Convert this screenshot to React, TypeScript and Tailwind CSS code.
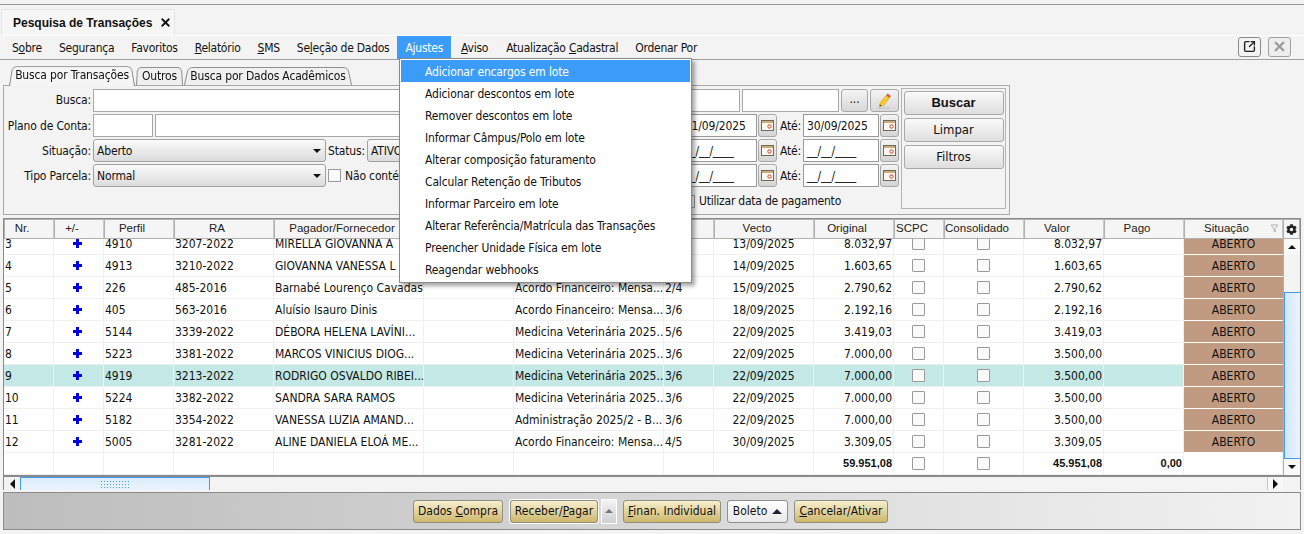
import { SquareArrowOutUpRight, X } from "lucide-react";
import { FaCog } from "react-icons/fa";
import type { ReactNode } from "react";

type Row = {
  nr: string;
  perfil: string;
  ra: string;
  nome: string;
  desc: string;
  parc: string;
  vecto: string;
  original: string;
  valor: string;
  active?: boolean;
};

const rows: Row[] = [
  { nr: "3", perfil: "4910", ra: "3207-2022", nome: "MIRELLA GIOVANNA A", desc: "", parc: "", vecto: "13/09/2025", original: "8.032,97", valor: "8.032,97" },
  { nr: "4", perfil: "4913", ra: "3210-2022", nome: "GIOVANNA VANESSA L", desc: "", parc: "", vecto: "14/09/2025", original: "1.603,65", valor: "1.603,65" },
  { nr: "5", perfil: "226", ra: "485-2016", nome: "Barnabé Lourenço Cavadas", desc: "Acordo Financeiro: Mensa...", parc: "2/4", vecto: "15/09/2025", original: "2.790,62", valor: "2.790,62" },
  { nr: "6", perfil: "405", ra: "563-2016", nome: "Aluísio Isauro Dinis", desc: "Acordo Financeiro: Mensa...", parc: "3/6", vecto: "18/09/2025", original: "2.192,16", valor: "2.192,16" },
  { nr: "7", perfil: "5144", ra: "3339-2022", nome: "DÉBORA HELENA LAVÍNI...", desc: "Medicina Veterinária 2025...", parc: "5/6", vecto: "22/09/2025", original: "3.419,03", valor: "3.419,03" },
  { nr: "8", perfil: "5223", ra: "3381-2022", nome: "MARCOS VINICIUS DIOG...", desc: "Medicina Veterinária 2025...", parc: "3/6", vecto: "22/09/2025", original: "7.000,00", valor: "3.500,00" },
  { nr: "9", perfil: "4919", ra: "3213-2022", nome: "RODRIGO OSVALDO RIBEI...", desc: "Medicina Veterinária 2025...", parc: "3/6", vecto: "22/09/2025", original: "7.000,00", valor: "3.500,00", active: true },
  { nr: "10", perfil: "5224", ra: "3382-2022", nome: "SANDRA SARA RAMOS", desc: "Medicina Veterinária 2025...", parc: "3/6", vecto: "22/09/2025", original: "7.000,00", valor: "3.500,00" },
  { nr: "11", perfil: "5182", ra: "3354-2022", nome: "VANESSA LUZIA AMAND...", desc: "Administração 2025/2 - B...", parc: "3/6", vecto: "22/09/2025", original: "7.000,00", valor: "3.500,00" },
  { nr: "12", perfil: "5005", ra: "3281-2022", nome: "ALINE DANIELA ELOÁ ME...", desc: "Acordo Financeiro: Mensa...", parc: "4/5", vecto: "30/09/2025", original: "3.309,05", valor: "3.309,05" },
];

const menuItems = [
  "Adicionar encargos em lote",
  "Adicionar descontos em lote",
  "Remover descontos em lote",
  "Informar Câmpus/Polo em lote",
  "Alterar composição faturamento",
  "Calcular Retenção de Tributos",
  "Informar Parceiro em lote",
  "Alterar Referência/Matrícula das Transações",
  "Preencher Unidade Física em lote",
  "Reagendar webhooks",
];

const headers = [
  { label: "Nr.", w: "w-[50px]" },
  { label: "+/-", w: "w-[50px]" },
  { label: "Perfil", w: "w-[70px]" },
  { label: "RA", w: "w-[100px]" },
  { label: "Pagador/Fornecedor", w: "w-[150px]" },
  { label: "", w: "w-[90px]" },
  { label: "", w: "w-[150px]" },
  { label: "", w: "w-[50px]" },
  { label: "Vecto", w: "w-[100px]" },
  { label: "Original", w: "w-[80px]" },
  { label: "SCPC", w: "w-[50px]" },
  { label: "Consolidado", w: "w-[80px]" },
  { label: "Valor", w: "w-[80px]" },
  { label: "Pago", w: "w-[80px]" },
  { label: "Situação", w: "w-[99px]" },
];

const Cell = ({ w, className = "", children }: { w: string; className?: string; children?: ReactNode }) => (
  <div className={`${w} shrink-0 h-full border-r border-b border-[#f0f0f0] px-px flex items-center whitespace-nowrap overflow-hidden ${className}`}>
    {children}
  </div>
);

const Check = () => <div className="w-[13px] h-[13px] border border-[#9a9a9a] bg-[#fafafa] rounded-[1px]" />;

const DataRow = ({ r }: { r: Row }) => (
  <div className={`flex h-[22px] shrink-0 text-[#111] ${r.active ? "bg-[#c3e8e5]" : "bg-white"}`}>
    <Cell w="w-[50px]">{r.nr}</Cell>
    <Cell w="w-[50px]" className="justify-center pr-[4px]">
      <span className="relative block w-[9px] h-[9px]">
        <span className="absolute left-0 top-[3px] w-[9px] h-[3px] bg-[#0000e6]" />
        <span className="absolute left-[3px] top-0 w-[3px] h-[9px] bg-[#0000e6]" />
      </span>
    </Cell>
    <Cell w="w-[70px]">{r.perfil}</Cell>
    <Cell w="w-[100px]">{r.ra}</Cell>
    <Cell w="w-[150px]">{r.nome}</Cell>
    <Cell w="w-[90px]" />
    <Cell w="w-[150px]">{r.desc}</Cell>
    <Cell w="w-[50px]">{r.parc}</Cell>
    <Cell w="w-[100px]" className="justify-center">{r.vecto}</Cell>
    <Cell w="w-[80px]" className="justify-end">{r.original}</Cell>
    <Cell w="w-[50px]" className="justify-center"><Check /></Cell>
    <Cell w="w-[80px]" className="justify-center"><Check /></Cell>
    <Cell w="w-[80px]" className="justify-end">{r.valor}</Cell>
    <Cell w="w-[80px]" />
    <div className="w-[99px] shrink-0 h-full bg-[#c19a82] border-b border-white flex items-center justify-center">ABERTO</div>
  </div>
);

const CalBtn = () => (
  <button className="w-[19px] h-[23px] ml-px flex items-center justify-center rounded-[3px] border border-[#a8a8a8] bg-gradient-to-b from-[#f4f4f4] to-[#d4d4d4]">
    <svg width="13" height="11" viewBox="0 0 13 11">
      <rect x="0.5" y="0.5" width="12" height="10" fill="#fbf8f0" stroke="#6f6a5c" />
      <rect x="1" y="1" width="11" height="2" fill="#c9ae7c" />
      <circle cx="8.5" cy="6.5" r="1.7" fill="none" stroke="#d8402e" />
    </svg>
  </button>
);

const DateInput = ({ value }: { value: string }) => (
  <div className="w-[76px] h-[23px] border border-[#9a9a9a] bg-white flex items-center px-[3px] shrink-0">{value}</div>
);

const Select = ({ value, w }: { value: string; w: string }) => (
  <div className={`${w} h-[23px] shrink-0 border border-[#a0a0a0] rounded-[3px] bg-gradient-to-b from-[#fafafa] to-[#dcdcdc] flex items-center justify-between pl-[3px] pr-[4px]`}>
    <span>{value}</span>
    <span className="w-0 h-0 border-x-[4px] border-x-transparent border-t-[4px] border-t-[#111]" />
  </div>
);

const SideBtn = ({ children, className = "" }: { children: ReactNode; className?: string }) => (
  <button className={`w-[100px] h-[24px] rounded-[3px] border border-[#a8a8a8] bg-gradient-to-b from-[#fafafa] to-[#dedede] text-[13px] tracking-normal ${className}`}>{children}</button>
);

const GoldBtn = ({ children, w }: { children: ReactNode; w: string }) => (
  <button className={`${w} h-[23px] rounded-[3px] border border-[#8f8f80] bg-gradient-to-b from-[#f7f0cf] to-[#cdb76c] text-[#111] whitespace-nowrap`}>{children}</button>
);

const Tab = ({ children, active, className = "" }: { children: ReactNode; active?: boolean; className?: string }) => (
  <div
    className={`relative isolate flex items-center justify-center whitespace-nowrap tracking-[-0.16px] before:absolute before:inset-0 before:-z-10 before:origin-bottom before:rounded-t-[5px] before:border before:border-b-0 before:border-[#8a8a8a] before:[transform:perspective(40px)_rotateX(6deg)] ${
      active ? "h-[21px] -mb-px z-10 pb-[2px] before:bg-[#f5f5f5]" : "h-[19px] before:bg-[#f0f0f0]"
    } ${className}`}
  >
    {children}
  </div>
);

const MenuBar = () => (
  <div className="h-[24px] flex items-center border-b border-[#a0a0a0] pl-[4px] pr-[13px] tracking-[-0.25px]">
    <span className="px-[8px] mr-px"><span>S<u>o</u>bre</span></span>
    <span className="px-[8px] mr-px">Segurança</span>
    <span className="px-[8px] mr-px">Favoritos</span>
    <span className="px-[8px] mr-px"><u>R</u>elatório</span>
    <span className="px-[8px] mr-px"><u>S</u>MS</span>
    <span className="px-[8px]">Se<u>l</u>eção de Dados</span>
    <span className="px-[8px] mr-[2px] h-[23px] flex items-center bg-[#3c9cfa] text-white">Ajustes</span>
    <span className="px-[8px] mr-[2px]"><u>A</u>viso</span>
    <span className="px-[8px] mr-px">Atualização <u>C</u>adastral</span>
    <span className="px-[8px] mr-px">Ordenar Por</span>
    <div className="ml-auto flex gap-[7px] -mt-[2px]">
      <button className="w-[23px] h-[20px] flex items-center justify-center rounded-[3px] border border-[#8a8a8a] bg-[#f4f4f4]">
        <SquareArrowOutUpRight size={13} strokeWidth={2.6} className="text-[#222]" />
      </button>
      <button className="w-[23px] h-[20px] flex items-center justify-center rounded-[3px] border border-[#a0a0a0] bg-[#eeeeee]">
        <X size={15} strokeWidth={3.8} className="text-[#9a9a9a]" />
      </button>
    </div>
  </div>
);

const FilterPanel = () => (
  <div className="w-[1007px] h-[130px] border border-[#a8a8a8] bg-[#f3f3f3] ml-[3px] flex pl-[2px] pr-[3px] pt-[2px] gap-[2px] tracking-[-0.15px]">
    <div className="w-[893px] shrink-0 flex flex-col">
      <div className="flex items-center h-[24px] gap-[2px] shrink-0">
        <span className="w-[85px] text-right shrink-0">Busca:</span>
        <div className="w-[647px] h-[23px] bg-white border border-[#a8a8a8]" />
        <div className="w-[97px] h-[23px] bg-white border border-[#a8a8a8]" />
        <button className="w-[27px] h-[23px] rounded-[3px] border border-[#a8a8a8] bg-gradient-to-b from-[#f4f4f4] to-[#d8d8d8] leading-none pb-[2px]">...</button>
        <button className="w-[29px] h-[23px] flex items-center justify-center rounded-[3px] border border-[#a8a8a8] bg-gradient-to-b from-[#f4f4f4] to-[#d8d8d8]">
          <svg width="17" height="17" viewBox="0 0 17 17">
            <path d="M2 16 H14" stroke="#c0c0c0" />
            <path d="M4 11 L10 3.5 L13.5 6 L7.5 13.5 L3.5 14.5 Z" fill="#f6c92e" stroke="#dba51e" strokeWidth="0.6" />
            <path d="M10 3.5 L11.5 1.5 L15 4 L13.5 6 Z" fill="#d9603c" />
            <path d="M3.5 14.5 L4 12.5 L5.5 13.8 Z" fill="#333" />
          </svg>
        </button>
      </div>
      <div className="flex items-center h-[25px] gap-[2px] mt-[1px] shrink-0">
        <span className="w-[85px] text-right shrink-0 whitespace-nowrap">Plano de Conta:</span>
        <div className="w-[60px] h-[23px] bg-white border border-[#a8a8a8] shrink-0" />
        <div className="w-[500px] h-[23px] bg-white border border-[#a8a8a8] shrink-0" />
        <div className="ml-auto flex items-center">
          <DateInput value="01/09/2025" />
          <CalBtn />
          <span className="ml-[3px] mr-[2px]">Até:</span>
          <DateInput value="30/09/2025" />
          <CalBtn />
        </div>
      </div>
      <div className="flex items-center h-[25px] gap-[2px] shrink-0">
        <span className="w-[85px] text-right shrink-0">Situação:</span>
        <Select value="Aberto" w="w-[233px]" />
        <span>Status:</span>
        <Select value="ATIVO" w="w-[120px]" />
        <div className="ml-auto flex items-center">
          <DateInput value="__/__/____" />
          <CalBtn />
          <span className="ml-[3px] mr-[2px]">Até:</span>
          <DateInput value="__/__/____" />
          <CalBtn />
        </div>
      </div>
      <div className="flex items-center h-[25px] gap-[2px] shrink-0">
        <span className="w-[85px] text-right shrink-0">Tipo Parcela:</span>
        <Select value="Normal" w="w-[233px]" />
        <div className="w-[13px] h-[13px] border border-[#9a9a9a] bg-[#fafafa] mr-[2px]" />
        <span>Não contém</span>
        <div className="ml-auto flex items-center">
          <DateInput value="__/__/____" />
          <CalBtn />
          <span className="ml-[3px] mr-[2px]">Até:</span>
          <DateInput value="__/__/____" />
          <CalBtn />
        </div>
      </div>
      <div className="flex items-center h-[24px] pl-[676px] gap-[4px] mt-[1px]">
        <div className="w-[13px] h-[13px] border border-[#9a9a9a] bg-[#fafafa]" />
        <span className="tracking-[-0.22px]">Utilizar data de pagamento</span>
      </div>
    </div>
    <div className="w-[105px] h-[121px] border border-[#b4b4b4] flex flex-col items-center pt-[2px] gap-[3px] shrink-0">
      <SideBtn className="font-bold font-['Liberation_Sans']">Buscar</SideBtn>
      <SideBtn>Limpar</SideBtn>
      <SideBtn>Filtros</SideBtn>
    </div>
  </div>
);

const Table = () => (
  <div className="mx-[3px] mt-[3px] w-[1298px] border border-[#8a8a8a] border-b-0 flex flex-col bg-white">
    <div className="flex h-[20px] bg-[#f3f3f3]">
      {headers.map((h, i) => (
        <div
          key={i}
          className={`${h.w} shrink-0 relative border border-[#b0b0b0] border-r-[#c8c8c8] bg-[#f5f5f5] flex items-center justify-center pr-[14px] whitespace-nowrap text-[11.5px] text-[#222] font-['Liberation_Sans']`}
        >
          {h.label}
          {h.label === "Situação" && (
            <svg width="9" height="9" viewBox="0 0 9 9" className="absolute right-[3px] top-[4px]">
              <path d="M1 1 H8 L5.2 4.5 V8 L3.8 7 V4.5 Z" fill="none" stroke="#b0b0b0" />
            </svg>
          )}
        </div>
      ))}
      <div className="w-[17px] shrink-0 border border-[#b0b0b0] flex items-center justify-center bg-[#f5f5f5]">
        <FaCog size={11} className="text-[#222]" />
      </div>
    </div>
    <div className="flex h-[236px]">
      <div className="w-[1279px] shrink-0 overflow-hidden flex flex-col">
        <div className="-mt-[6px] flex flex-col">
          {rows.map((r) => (
            <DataRow key={r.nr} r={r} />
          ))}
          <div className="flex h-[22px] shrink-0 bg-white font-bold text-[11px] text-[#111] font-['Liberation_Sans']">
            <Cell w="w-[50px]" />
            <Cell w="w-[50px]" />
            <Cell w="w-[70px]" />
            <Cell w="w-[100px]" />
            <Cell w="w-[150px]" />
            <Cell w="w-[90px]" />
            <Cell w="w-[150px]" />
            <Cell w="w-[50px]" />
            <Cell w="w-[100px]" />
            <Cell w="w-[80px]" className="justify-end">59.951,08</Cell>
            <Cell w="w-[50px]" className="justify-center"><Check /></Cell>
            <Cell w="w-[80px]" className="justify-center"><Check /></Cell>
            <Cell w="w-[80px]" className="justify-end">45.951,08</Cell>
            <Cell w="w-[80px]" className="justify-end">0,00</Cell>
            <Cell w="w-[99px]" />
          </div>
        </div>
      </div>
      <div className="w-[17px] shrink-0 bg-[#f3f3f3] border-l border-[#b0b0b0] flex flex-col">
        <div className="h-[16px] flex items-center justify-center bg-[#f8f8f8]">
          <span className="w-0 h-0 border-x-[4px] border-x-transparent border-b-[4px] border-b-[#111]" />
        </div>
        <div className="mt-auto h-[167px] border-t border-b border-l border-[#3d9bf0] bg-gradient-to-r from-[#d4e7fb] to-[#eaf4fe]" />
        <div className="h-[16px] shrink-0 flex items-center justify-center bg-[#f8f8f8]">
          <span className="w-0 h-0 border-x-[4px] border-x-transparent border-t-[4px] border-t-[#111]" />
        </div>
      </div>
    </div>
    <div className="flex h-[15px] border-t-2 border-[#8a8a8a] bg-[#f3f3f3]">
      <div className="w-[16px] shrink-0 flex items-center justify-center">
        <span className="w-0 h-0 border-y-[5px] border-y-transparent border-r-[5px] border-r-[#111]" />
      </div>
      <div className="w-[190px] shrink-0 border-x border-t border-[#3d9bf0] bg-gradient-to-b from-[#dcebfb] to-[#eaf4fe] flex items-center justify-center">
        <div className="w-[30px] h-[9px] bg-[radial-gradient(#4a9cf0_1px,transparent_1px)] bg-[length:3px_3px]" />
      </div>
      <div className="flex-1" />
      <div className="w-[16px] shrink-0 border-l border-[#c8c8c8] bg-[#f8f8f8] flex items-center justify-center">
        <span className="w-0 h-0 border-y-[5px] border-y-transparent border-l-[5px] border-l-[#111]" />
      </div>
      <div className="w-[17px] shrink-0" />
    </div>
  </div>
);

const Footer = () => (
  <div className="mx-[3px] mt-[2px] w-[1298px] h-[38px] border border-[#8a8a8a] bg-gradient-to-r from-[#bdbdbd] to-[#f2f2f2] flex items-center justify-center gap-[6px] pr-[3px]">
    <GoldBtn w="w-[90px]">Dados <u>C</u>ompra</GoldBtn>
    <div className="flex items-center gap-[2px]">
      <div className="border border-white rounded-[3px] flex"><GoldBtn w="w-[88px]">Receber/<u>P</u>agar</GoldBtn></div>
      <div className="w-[16px] h-[25px] border border-white bg-gradient-to-b from-[#f4f4f4] to-[#d0d0d0] flex items-center justify-center">
        <span className="w-0 h-0 border-x-[4px] border-x-transparent border-b-[4px] border-b-[#777]" />
      </div>
    </div>
    <GoldBtn w="w-[98px]"><u>F</u>inan. Individual</GoldBtn>
    <button className="w-[61px] h-[23px] rounded-[3px] border border-[#8f8f8f] bg-gradient-to-b from-white to-[#e8e8e8] flex items-center justify-center gap-[5px] text-[#111]">
      Boleto
      <span className="w-0 h-0 border-x-[5px] border-x-transparent border-b-[5px] border-b-[#223]" />
    </button>
    <GoldBtn w="w-[94px]"><u>C</u>ancelar/Ativar</GoldBtn>
  </div>
);

const App = () => {
  return (
    <div
      className="w-[1304px] h-[534px] overflow-hidden bg-[#f3f3f3] text-[12px] text-[#111] relative"
      style={{ fontFamily: '"DejaVu Sans Condensed", "Liberation Sans", sans-serif' }}
    >
      <div className="h-[5px] border-b border-[#9a9a9a]" />
      <div className="mt-[4px] ml-px w-[174px] h-[26px] bg-[#f6f6f6] border border-b-0 border-[#e4e4e4] flex items-center pl-[11px] gap-[7px] font-bold font-['Liberation_Sans'] whitespace-nowrap">
        <span>Pesquisa de Transações</span>
        <X size={13} strokeWidth={3.4} />
      </div>
      <div className="border-t border-white">
        <MenuBar />
        <div className="flex items-end h-[25px] pl-[9px] gap-px">
          <Tab active className="w-[126px]">Busca por Transações</Tab>
          <Tab className="w-[47px]">Outros</Tab>
          <Tab className="w-[168px]">Busca por Dados Acadêmicos</Tab>
        </div>
        <FilterPanel />
        <Table />
        <Footer />
      </div>
      <div className="absolute left-[399px] top-[58px] w-[293px] h-[225px] bg-white border border-[#8a8a8a] px-px pt-[1px] tracking-[-0.15px] shadow-[3px_3px_4px_rgba(0,0,0,0.35)]">
        {menuItems.map((m, i) => (
          <div key={m} className={`h-[22px] flex items-center pl-[24px] pt-px whitespace-nowrap ${i === 0 ? "bg-[#3c9cfa] text-white" : ""}`}>
            {m}
          </div>
        ))}
      </div>
    </div>
  );
};

export default App;
